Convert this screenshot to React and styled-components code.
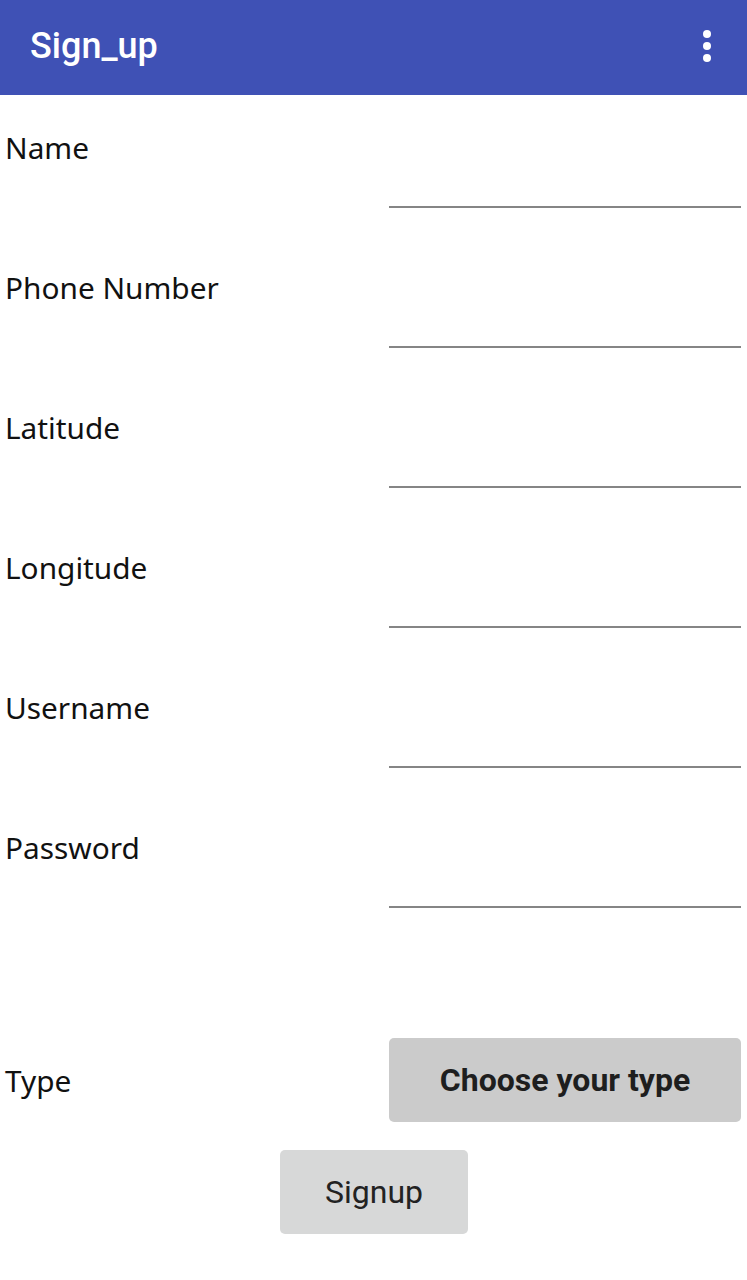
import React from 'react';
import styled, { createGlobalStyle } from 'styled-components';

const GlobalStyle = createGlobalStyle`
  body {
    margin: 0;
    background: #ffffff;
    font-family: "Noto Sans", "Open Sans", sans-serif;
  }
`;

const Screen = styled.main`
  width: 747px;
  min-height: 1280px;
  background: #ffffff;
`;

const Toolbar = styled.header`
  height: 95px;
  background: #3f51b5;
  display: flex;
  align-items: center;
  justify-content: space-between;
  padding: 0 30px 0 30px;
  box-sizing: border-box;
`;

const Title = styled.h1`
  margin: 0;
  color: #ffffff;
  font-family: Roboto, "Liberation Sans", sans-serif;
  font-weight: 500;
  font-size: 36px;
  letter-spacing: 0;
  padding-bottom: 4px;
`;

const Kebab = styled.div`
  display: flex;
  flex-direction: column;
  gap: 4px;
  margin-right: 6px;
  padding-bottom: 4px;

  span {
    width: 8px;
    height: 8px;
    border-radius: 50%;
    background: #ffffff;
  }
`;

const Row = styled.div`
  display: flex;
  height: 140px;
`;

const Label = styled.label`
  width: 384px;
  padding-left: 5px;
  padding-top: 33px;
  font-size: 29.8px;
  color: #111111;
  line-height: 40px;
`;

const Field = styled.div`
  flex: 1;
  margin-right: 6px;
  height: 111px;
  border-bottom: 2px solid #858585;
`;

const TypeRow = styled.div`
  display: flex;
  align-items: center;
  margin-top: 103px;
`;

const TypeLabel = styled.span`
  width: 384px;
  padding-left: 5px;
  font-size: 29.8px;
  color: #111111;
`;

const ChooseButton = styled.button`
  width: 352px;
  height: 84px;
  border: none;
  border-radius: 5px;
  background: #cbcbcb;
  color: #1e1e1e;
  font-family: Roboto, "Liberation Sans", sans-serif;
  font-weight: 700;
  font-size: 32px;
`;

const SubmitRow = styled.div`
  display: flex;
  padding-left: 280px;
  margin-top: 28px;
`;

const SignupButton = styled.button`
  width: 188px;
  height: 84px;
  border: none;
  border-radius: 5px;
  background: #d7d8d8;
  color: #222222;
  font-family: Roboto, "Liberation Sans", sans-serif;
  font-weight: 400;
  font-size: 32px;
`;

const fields = ['Name', 'Phone Number', 'Latitude', 'Longitude', 'Username', 'Password'];

export default function App() {
  return (
    <Screen>
      <GlobalStyle />
      <Toolbar>
        <Title>Sign_up</Title>
        <Kebab>
          <span />
          <span />
          <span />
        </Kebab>
      </Toolbar>
      {fields.map(name => (
        <Row key={name}>
          <Label>{name}</Label>
          <Field />
        </Row>
      ))}
      <TypeRow>
        <TypeLabel>Type</TypeLabel>
        <ChooseButton>Choose your type</ChooseButton>
      </TypeRow>
      <SubmitRow>
        <SignupButton>Signup</SignupButton>
      </SubmitRow>
    </Screen>
  );
}
